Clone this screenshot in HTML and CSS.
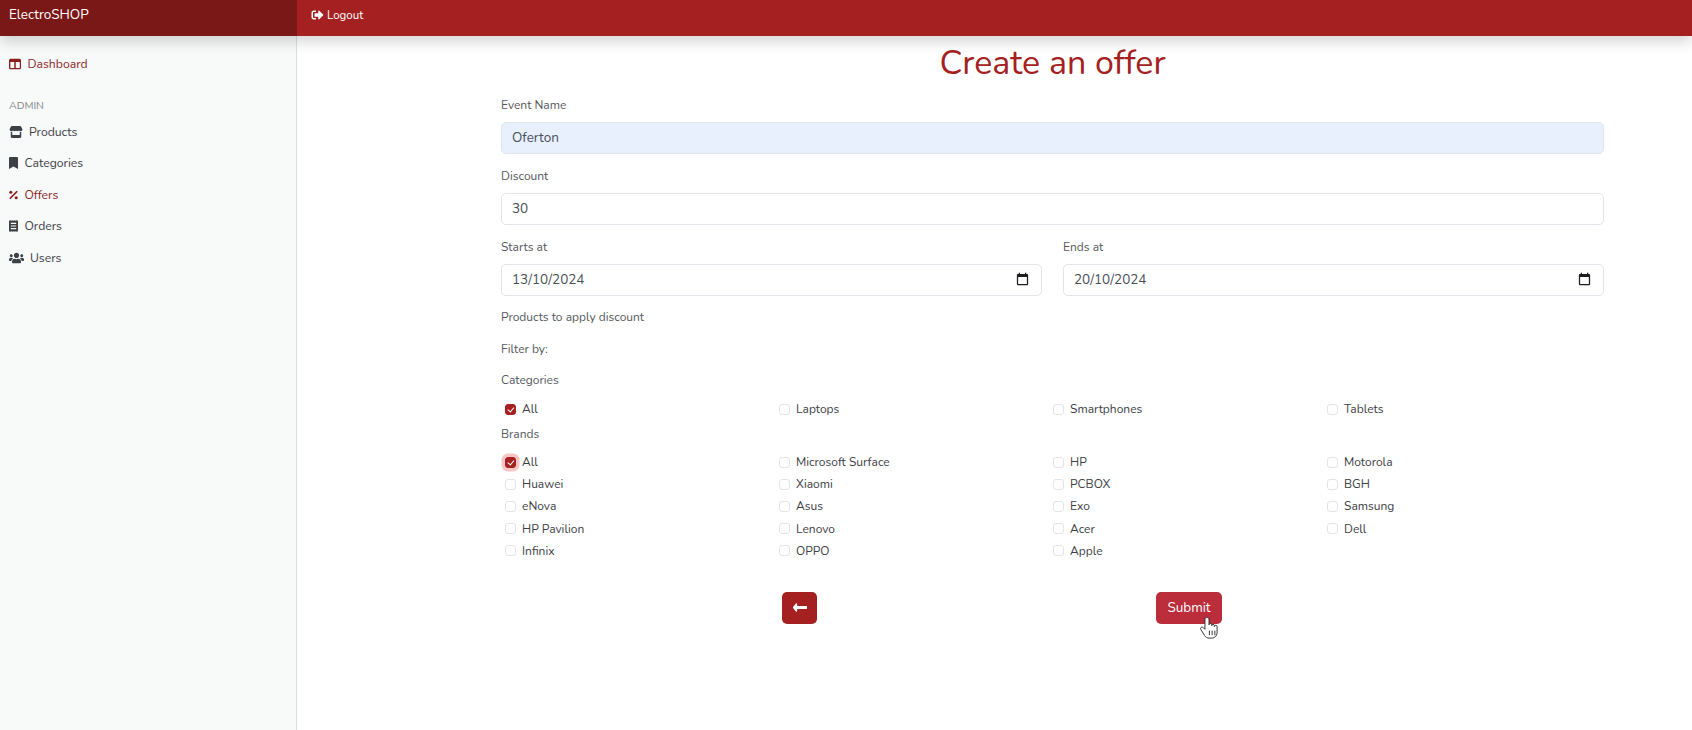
FILE: index.html
```html
<!DOCTYPE html>
<html lang="en">
<head>
<meta charset="utf-8">
<title>Create an offer</title>
<link rel="stylesheet" href="styles.css">
</head>
<body>
<header class="topbar">
  <a class="brand">ElectroSHOP</a>
  <a class="logout"><svg class="ico-logout" viewBox="0 0 512 512"><path d="M497 273L329 441c-15 15-41 4.5-41-17v-96H152c-13.3 0-24-10.7-24-24v-96c0-13.3 10.7-24 24-24h136V88c0-21.4 25.9-32 41-17l168 168c9.3 9.4 9.3 24.6 0 34zM192 436v-40c0-6.6-5.4-12-12-12H96c-17.7 0-32-14.3-32-32V160c0-17.7 14.3-32 32-32h84c6.6 0 12-5.4 12-12V76c0-6.6-5.4-12-12-12H96c-53 0-96 43-96 96v192c0 53 43 96 96 96h84c6.6 0 12-5.4 12-12z"/></svg>Logout</a>
</header>
<div class="shell">
  <aside class="sidebar">
    <a class="nav-item active dash"><svg class="ico w13" viewBox="0 0 16 14"><path d="M2 0h12a2 2 0 0 1 2 2v10a2 2 0 0 1-2 2H2a2 2 0 0 1-2-2V2a2 2 0 0 1 2-2zm-.2 4.2v7.6a.4.4 0 0 0 .4.4H7V4.2zm7.2 0v8h5a.4.4 0 0 0 .4-.4V4.2z"/></svg><span class="t-dash">Dashboard</span></a>
    <div class="nav-head">ADMIN</div>
    <a class="nav-item"><svg class="ico w14" viewBox="0 0 576 512"><path d="M547.6 103.8L490.3 13.1C485.2 5 476.1 0 466.4 0H109.6C99.9 0 90.8 5 85.7 13.1L28.3 103.8c-29.6 46.8-3.4 111.9 51.9 119.4c4 .5 8.1 .8 12.1 .8c26.1 0 49.3-11.4 65.2-29c15.9 17.6 39.1 29 65.2 29c26.1 0 49.3-11.4 65.2-29c15.9 17.6 39.1 29 65.2 29c26.2 0 49.3-11.4 65.2-29c16 17.6 39.1 29 65.2 29c4.1 0 8.1-.3 12.1-.8c55.5-7.4 81.8-72.5 52.1-119.4zM499.7 254.9l-.1 0c-5.3 .7-10.7 1.1-16.2 1.1c-12.4 0-24.3-1.9-35.4-5.3V384H128V250.6c-11.2 3.5-23.2 5.4-35.6 5.4c-5.5 0-11-.4-16.3-1.1l-.1 0c-4.1-.6-8.1-1.3-12-2.3V384v64c0 35.3 28.7 64 64 64H448c35.3 0 64-28.7 64-64V384 252.6c-4 1-8 1.8-12.3 2.3z"/></svg><span class="t-prod">Products</span></a>
    <a class="nav-item"><svg class="ico w10" viewBox="0 0 384 512"><path d="M0 512V48C0 21.49 21.49 0 48 0h288c26.51 0 48 21.49 48 48v464L192 400 0 512z"/></svg><span class="t-std">Categories</span></a>
    <a class="nav-item active"><svg class="ico w10" viewBox="0 0 10 10"><path d="M8.4.2 9.8 1.3 1.6 9.8.2 8.7z"/><circle cx="2" cy="2" r="1.7"/><circle cx="8" cy="8" r="1.7"/></svg><span class="t-std">Offers</span></a>
    <a class="nav-item"><svg class="ico w10" viewBox="0 0 10 13"><path d="M0 0l1 .7L2 0l1 .7L4 0l1 .7L6 0l1 .7L8 0l1 .7L10 0v13l-1-.7-1 .7-1-.7-1 .7-1-.7-1 .7-1-.7-1 .7-1-.7-1 .7zm2 3v1.2h6V3zm0 2.9v1.2h6V5.900zm0 2.900V10h6V8.800z"/></svg><span class="t-std">Orders</span></a>
    <a class="nav-item"><svg class="ico w15" viewBox="0 0 640 512"><path d="M96 224c35.300 0 64-28.700 64-64s-28.700-64-64-64-64 28.700-64 64 28.700 64 64 64zm448 0c35.300 0 64-28.700 64-64s-28.700-64-64-64-64 28.700-64 64 28.700 64 64 64zm32 32h-64c-17.600 0-33.500 7.100-45.100 18.600 40.300 22.100 68.900 62 75.100 109.400h66c17.700 0 32-14.300 32-32v-32c0-35.300-28.700-64-64-64zm-256 0c61.900 0 112-50.100 112-112S381.900 32 320 32 208 82.100 208 144s50.100 112 112 112zm76.800 32h-8.300c-20.800 10-43.900 16-68.500 16s-47.600-6-68.500-16h-8.300C179.600 288 128 339.600 128 403.200V432c0 26.500 21.500 48 48 48h288c26.500 0 48-21.500 48-48v-28.800c0-63.600-51.600-115.200-115.200-115.200zm-223.700-13.400C161.500 263.100 145.600 256 128 256H64c-35.300 0-64 28.700-64 64v32c0 17.700 14.300 32 32 32h65.900c6.300-47.400 34.900-87.300 75.200-109.400z"/></svg><span class="t-users">Users</span></a>
  </aside>
  <main class="content">
    <h1 class="title">Create an offer</h1>
    <form class="offer">
      <div class="group">
        <label class="lab">Event Name</label>
        <input class="field autofilled" type="text" value="Oferton">
      </div>
      <div class="group">
        <label class="lab">Discount</label>
        <input class="field" type="text" value="30">
      </div>
      <div class="dates">
        <div class="group">
          <label class="lab">Starts at</label>
          <div class="date-wrap">
            <input class="field" type="text" value="13/10/2024">
            <svg class="cal" viewBox="0 0 24 24"><path d="M19 3h-1V1h-2v2H8V1H6v2H5C3.890 3 3 3.900 3 5v14a2 2 0 0 0 2 2h14c1.100 0 2-.9 2-2V5c0-1.100-.9-2-2-2zm0 16H5V8h14z"/></svg>
          </div>
        </div>
        <div class="group">
          <label class="lab">Ends at</label>
          <div class="date-wrap">
            <input class="field" type="text" value="20/10/2024">
            <svg class="cal" viewBox="0 0 24 24"><path d="M19 3h-1V1h-2v2H8V1H6v2H5C3.890 3 3 3.900 3 5v14a2 2 0 0 0 2 2h14c1.100 0 2-.9 2-2V5c0-1.100-.9-2-2-2zm0 16H5V8h14z"/></svg>
          </div>
        </div>
      </div>
      <div class="line l-prod">Products to apply discount</div>
      <div class="line l-filter">Filter by:</div>
      <div class="line l-cat">Categories</div>
      <div class="checks cats">
        <label class="chk"><input type="checkbox" checked><span>All</span></label>
        <label class="chk"><input type="checkbox"><span>Laptops</span></label>
        <label class="chk"><input type="checkbox"><span>Smartphones</span></label>
        <label class="chk"><input type="checkbox"><span>Tablets</span></label>
      </div>
      <div class="line l-brand">Brands</div>
      <div class="checks brands">
        <label class="chk"><input class="focused" type="checkbox" checked><span>All</span></label>
        <label class="chk"><input type="checkbox"><span>Microsoft Surface</span></label>
        <label class="chk"><input type="checkbox"><span>HP</span></label>
        <label class="chk"><input type="checkbox"><span>Motorola</span></label>
        <label class="chk"><input type="checkbox"><span>Huawei</span></label>
        <label class="chk"><input type="checkbox"><span>Xiaomi</span></label>
        <label class="chk"><input type="checkbox"><span>PCBOX</span></label>
        <label class="chk"><input type="checkbox"><span>BGH</span></label>
        <label class="chk"><input type="checkbox"><span>eNova</span></label>
        <label class="chk"><input type="checkbox"><span>Asus</span></label>
        <label class="chk"><input type="checkbox"><span>Exo</span></label>
        <label class="chk"><input type="checkbox"><span>Samsung</span></label>
        <label class="chk"><input type="checkbox"><span>HP Pavilion</span></label>
        <label class="chk"><input type="checkbox"><span>Lenovo</span></label>
        <label class="chk"><input type="checkbox"><span>Acer</span></label>
        <label class="chk"><input type="checkbox"><span>Dell</span></label>
        <label class="chk"><input type="checkbox"><span>Infinix</span></label>
        <label class="chk"><input type="checkbox"><span>OPPO</span></label>
        <label class="chk"><input type="checkbox"><span>Apple</span></label>
      </div>
      <div class="actions">
        <button class="btn back" type="button"><svg viewBox="0 140 448 232" preserveAspectRatio="none"><path d="M134.059 296H436c6.627 0 12-5.373 12-12v-56c0-6.627-5.373-12-12-12H134.059v-46.059c0-21.382-25.851-32.090-40.971-16.971L7.029 239.029c-9.373 9.373-9.373 24.569 0 33.941l86.059 86.059c15.119 15.119 40.971 4.411 40.971-16.971V296z"/></svg></button>
        <button class="btn submit" type="button">Submit</button>
      </div>
    </form>
  </main>
</div>
<svg class="pointer" viewBox="0 0 20 25"><path d="M7 1.500c-.9 0-1.500.7-1.500 1.500v11.500L3.800 12.700c-.8-.8-2-.8-2.700-.1-.6.6-.6 1.500-.1 2.200l4 6.500c1 1.800 2.800 3 5 3h3c3.400 0 6-2.700 6-6v-6.800c0-.9-.7-1.500-1.500-1.500s-1.500.6-1.500 1.500v-1c0-.9-.7-1.500-1.500-1.500s-1.500.6-1.500 1.500v-1c0-.9-.7-1.500-1.500-1.500s-1.500.6-1.500 1.500V3c0-.8-.6-1.500-1.500-1.500z" fill="#fff" stroke="#222" stroke-width="1"/><path d="M10.500 16v5M13.500 16v5M16.500 16v5" stroke="#222" stroke-width="1" fill="none"/></svg>
</body>
</html>
```
FILE: styles.css
```css
* { box-sizing: border-box; }
html, body { height: 100%; }
body {
  margin: 0;
  font-family: "Nunito", "Lato", "Noto Sans", sans-serif;
  font-size: 12px;
  color: #55585e;
  background: #fff;
  overflow: hidden;
  position: relative;
}
.topbar {
  height: 36px;
  display: flex;
  background: #a52121;
  color: #fff;
  box-shadow: 0 6px 14px rgba(0, 0, 0, .16);
  position: relative;
  z-index: 2;
}
.brand {
  width: 297px;
  padding: 6px 0 0 9px;
  background: #7a1717;
  font-size: 13.500px;
  line-height: 18px;
}
.logout {
  display: flex;
  align-items: flex-start;
  padding: 6px 0 0 14px;
  font-size: 11.500px;
  line-height: 18px;
}
.ico-logout { width: 13px; height: 12px; margin: 3px 3px 0 0; fill: #fff; }
.shell { display: flex; height: 694px; }
.sidebar {
  width: 297px;
  flex: none;
  background: #f8f9f9;
  border-right: 1px solid #dcdfe2;
  padding: 18px 0 0 9px;
}
.nav-item {
  display: flex;
  align-items: center;
  height: 31.500px;
  color: #3d4045;
  fill: #3d4045;
  font-size: 12.200px;
}
.nav-item.active { color: #8a1f1f; fill: #8a1f1f; }
.dash { height: 20px; }
.ico { flex: none; height: 12px; }
.w10 { width: 9px; }
.w13 { width: 12px; }
.w14 { width: 14px; }
.w15 { width: 15px; }
.t-dash { margin-left: 6.500px; }
.t-prod { margin-left: 6px; }
.t-std { margin-left: 6.500px; }
.t-users { margin-left: 6px; }
.nav-head {
  margin: 24px 0 2px;
  height: 16px;
  line-height: 16px;
  font-size: 10.500px;
  color: #80848a;
}
.content { flex: 1; padding: 5px 88px 0 204px; }
.title {
  margin: 0;
  height: 44px;
  line-height: 44px;
  text-align: center;
  font-size: 34px;
  font-weight: 400;
  color: #a52121;
}
.lab, .line {
  display: block;
  height: 20px;
  line-height: 20px;
  font-size: 12px;
  color: #55585e;
}
.lab { margin: 12px 0 7px; }
.offer { padding-top: 10px; }
.offer > .group:first-child .lab { margin-top: 0; }
.field {
  display: block;
  width: 100%;
  height: 32px;
  padding: 0 10px 2px;
  border: 1px solid #e1e4e8;
  border-radius: 5px;
  background: #fff;
  color: #495057;
  font: inherit;
  font-size: 13.500px;
  outline: none;
}
.autofilled { background: #e8f0fe; }
.group { min-width: 0; }
.dates { display: grid; grid-template-columns: 1fr 1fr; gap: 21px; }
.date-wrap { position: relative; }
.cal {
  position: absolute;
  right: 12px;
  top: 8px;
  width: 15px;
  height: 15px;
  fill: #1f1f1f;
}
.l-prod { margin-top: 11px; }
.l-filter { margin-top: 12px; }
.l-cat { margin-top: 11px; }
.checks {
  display: grid;
  grid-template-columns: repeat(4, 274px);
  padding-left: 4px;
}
.cats { margin-top: 9px; height: 20px; }
.l-brand { margin-top: 5px; }
.brands { margin-top: 7px; grid-auto-rows: 22.200px; }
.chk {
  display: flex;
  align-items: center;
  font-size: 12px;
  color: #3d4045;
}
.chk input {
  appearance: none;
  -webkit-appearance: none;
  margin: 0 6px 0 0;
  width: 11px;
  height: 11px;
  flex: none;
  border: 1px solid #e2e4e7;
  border-radius: 3px;
  background: #fff;
  position: relative;
}
.chk input:checked { background: #a52121; border-color: #a52121; }
.chk input:checked::after {
  content: "";
  position: absolute;
  left: 3px;
  top: 1.500px;
  width: 3px;
  height: 4.500px;
  border: solid #fff;
  border-width: 0 1.500px 1.500px 0;
  transform: rotate(40deg);
}
.chk input.focused { box-shadow: 0 0 0 3.500px #f8c4c4; }
.actions {
  display: flex;
  justify-content: space-between;
  padding: 0 382px 0 281px;
  margin-top: 30.500px;
}
.btn {
  height: 32px;
  border: 0;
  border-radius: 5px;
  color: #fff;
  font: inherit;
  font-size: 13.500px;
  padding: 0;
}
.back { width: 35px; background: #a52121; }
.back svg { width: 14px; height: 9px; fill: #fff; display: block; margin: -2px auto 0; }
.submit { width: 66px; background: #bb2d3b; padding-bottom: 2px; }
.pointer {
  position: absolute;
  left: 1200px;
  top: 616px;
  width: 18px;
  height: 23px;
}
```
